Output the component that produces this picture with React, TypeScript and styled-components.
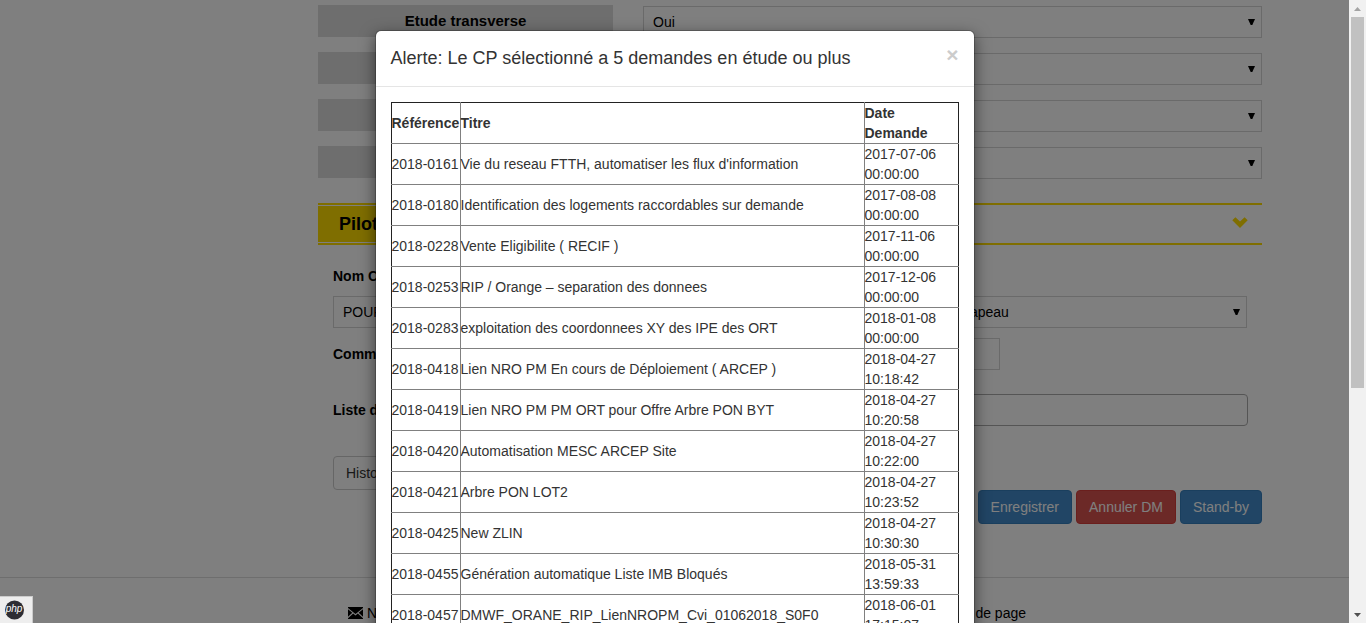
import React from "react";
import styled, { createGlobalStyle, css } from "styled-components";

const GlobalStyle = createGlobalStyle`
  *, *::before, *::after { box-sizing: border-box; }
  html, body { margin: 0; overflow: hidden; }
  body {
    font-family: "Liberation Sans", Arial, sans-serif;
    font-size: 14px;
    line-height: 20px;
    color: #000;
    background: #fff;
  }
  button, input, select { font: inherit; margin: 0; }
`;

const Shell = styled.div`
  display: flex;
  height: 100vh;
`;

const Viewport = styled.div`
  position: relative;
  flex: 1;
  min-width: 0;
  overflow: hidden;
`;

const Page = styled.div`
  padding-top: 5px;
`;

const Container = styled.div`
  display: grid;
  grid-template-columns: minmax(0, 231px) minmax(0, 944px);
  justify-content: center;
`;

const Main = styled.main`
  grid-column: 2;
`;

const FieldList = styled.div`
  display: flex;
  flex-direction: column;
  gap: 14px;
`;

const FieldRow = styled.div`
  display: grid;
  grid-template-columns: 295px 1fr;
  column-gap: 30px;
  height: 33px;
`;

const FieldLabel = styled.label`
  height: 32px;
  line-height: 32px;
  background: #ddd;
  text-align: center;
  font-size: 15px;
  font-weight: bold;
`;

const SelectBox = styled.div`
  display: flex;
  align-self: end;
  align-items: center;
  height: 32px;
  padding-right: 6px;
  border: 1px solid #d5d5d5;
  background: #fff;
`;

const NativeSelect = styled.select`
  appearance: none;
  flex: 1;
  min-width: 0;
  height: 30px;
  padding: 0 9px;
  border: 0;
  background: transparent;
  color: #000;
`;

const Caret = styled.svg`
  width: 7px;
  height: 6px;
  fill: #000;
`;

const SectionHeader = styled.header`
  display: flex;
  align-items: center;
  justify-content: space-between;
  margin-top: 24px;
  padding: 1px 0;
  border: solid #ffdc00;
  border-width: 2px 0;
`;

const SectionTitle = styled.h2`
  margin: 0;
  padding: 0 21px;
  background: #ffdc00;
  font-size: 18px;
  line-height: 36px;
`;

const Toggle = styled.button`
  display: flex;
  padding: 0 14px 3px;
  border: 0;
  background: none;
`;

const SectionBody = styled.section`
  display: flex;
  flex-direction: column;
  padding: 21px 15px 0;
`;

const TextLabel = styled.label`
  font-weight: bold;
`;

const SelectPair = styled.div`
  display: grid;
  grid-template-columns: 1fr 305px;
  column-gap: 30px;
  margin: 10px 0;
`;

const InlineField = styled.div`
  display: grid;
  grid-template-columns: 295px 1fr;
  align-items: center;
`;

const CommentField = styled(InlineField)`
  margin-right: 247px;
`;

const ListField = styled(InlineField)`
  margin: 24px -1px 30px 0;
`;

const TextInput = styled.input<{ $rounded?: boolean }>`
  width: 100%;
  height: 32px;
  padding: 0 9px;
  background: #fff;
  border: 1px solid ${(p) => (p.$rounded ? "#aaa" : "#d5d5d5")};
  border-radius: ${(p) => (p.$rounded ? "4px" : "0")};
`;

const tones = {
  plain: css`color: #333; background: #fff; border-color: #ccc;`,
  primary: css`color: #fff; background: #428bca; border-color: #357ebd;`,
  danger: css`color: #fff; background: #d9534f; border-color: #d43f3a;`,
};

const Button = styled.button<{ $tone: keyof typeof tones }>`
  height: 34px;
  padding: 0 12px;
  border: 1px solid;
  border-radius: 4px;
  ${(p) => tones[p.$tone]}
`;

const HistoryRow = styled.div`
  display: flex;
`;

const Actions = styled.div`
  display: flex;
  justify-content: flex-end;
  gap: 4px;
`;

const Footer = styled.footer`
  margin-top: 53px;
  padding-top: 25px;
  border-top: 1px solid #ddd;
`;

const FooterLinks = styled.nav`
  display: flex;
  justify-content: space-between;
  width: 678px;
  margin-left: 30px;
`;

const FooterLink = styled.a`
  display: flex;
  align-items: center;
  gap: 4px;
  color: #000;
  text-decoration: none;
`;

const Backdrop = styled.div`
  position: absolute;
  inset: 0;
  background: rgba(0, 0, 0, 0.5);
  overflow: hidden;
`;

const Dialog = styled.div`
  width: 600px;
  margin: 30px auto;
  background: #fff;
  background-clip: padding-box;
  border: 1px solid rgba(0, 0, 0, 0.2);
  border-radius: 6px;
  box-shadow: 0 5px 15px rgba(0, 0, 0, 0.5);
  color: #333;
`;

const DialogHeader = styled.div`
  display: flex;
  justify-content: space-between;
  align-items: flex-start;
  padding: 15px;
  border-bottom: 1px solid #e5e5e5;
`;

const DialogTitle = styled.h4`
  margin: 0;
  font-size: 18px;
  line-height: 25px;
  font-weight: normal;
`;

const CloseButton = styled.button`
  padding: 0;
  border: 0;
  background: none;
  color: #ccc;
  font-size: 21px;
  font-weight: bold;
  line-height: 18px;
`;

const DialogBody = styled.div`
  padding: 15px;
`;

const Cell = styled.td`
  padding: 0;
  border: 1px solid #808080;
  text-align: left;
  vertical-align: middle;

  &:first-child { border-left-color: #222; }
  &:last-child { border-right-color: #222; }
`;

const DataTable = styled.table`
  width: 100%;
  table-layout: fixed;
  border-collapse: collapse;

  thead ${Cell} { border-top-color: #222; }
  tbody tr:last-child ${Cell} { border-bottom-color: #222; }
`;

const Column = styled.col<{ $width?: number }>`
  ${(p) => p.$width && `width: ${p.$width}px;`}
`;

const Scrollbar = styled.div`
  display: flex;
  flex-direction: column;
  align-items: center;
  width: 17px;
  background: #f1f1f1;
`;

const ScrollArrow = styled.div`
  display: flex;
  align-items: center;
  justify-content: center;
  height: 17px;
`;

const ScrollTrack = styled.div`
  flex: 1;
`;

const ScrollThumb = styled.div`
  width: 13px;
  height: 63%;
  background: #c1c1c1;
`;

const DebugBadge = styled.button`
  position: absolute;
  left: 0;
  bottom: 0;
  display: flex;
  align-items: center;
  width: 33px;
  height: 27px;
  padding: 0 4px;
  border: solid #ccc;
  border-width: 1px 1px 0 0;
  background: #eee;
`;

const requests = [
  ["2018-0161", "Vie du reseau FTTH, automatiser les flux d'information", "2017-07-06 00:00:00"],
  ["2018-0180", "Identification des logements raccordables sur demande", "2017-08-08 00:00:00"],
  ["2018-0228", "Vente Eligibilite ( RECIF )", "2017-11-06 00:00:00"],
  ["2018-0253", "RIP / Orange – separation des donnees", "2017-12-06 00:00:00"],
  ["2018-0283", "exploitation des coordonnees XY des IPE des ORT", "2018-01-08 00:00:00"],
  ["2018-0418", "Lien NRO PM En cours de Déploiement ( ARCEP )", "2018-04-27 10:18:42"],
  ["2018-0419", "Lien NRO PM PM ORT pour Offre Arbre PON BYT", "2018-04-27 10:20:58"],
  ["2018-0420", "Automatisation MESC ARCEP Site", "2018-04-27 10:22:00"],
  ["2018-0421", "Arbre PON LOT2", "2018-04-27 10:23:52"],
  ["2018-0425", "New ZLIN", "2018-04-27 10:30:30"],
  ["2018-0455", "Génération automatique Liste IMB Bloqués", "2018-05-31 13:59:33"],
  ["2018-0457", "DMWF_ORANE_RIP_LienNROPM_Cvi_01062018_S0F0", "2018-06-01 17:15:07"],
];

const fields = [
  { id: "transverse", label: "Etude transverse", value: "Oui" },
  { id: "field-2", label: "", value: "" },
  { id: "field-3", label: "", value: "" },
  { id: "field-4", label: "", value: "" },
];

function Select({ id, value, label }: { id: string; value: string; label?: string }) {
  return (
    <SelectBox>
      <NativeSelect id={id} aria-label={label} defaultValue={value}>
        <option value={value}>{value}</option>
      </NativeSelect>
      <Caret viewBox="0 0 7 6" aria-hidden="true">
        <path d="M0 0h7L4.300 6h-1.600z" />
      </Caret>
    </SelectBox>
  );
}

export default function App() {
  return (
    <>
      <GlobalStyle />
      <Shell>
        <Viewport>
          <Page>
            <Container>
              <Main>
                <FieldList>
                  {fields.map((f) => (
                    <FieldRow key={f.id}>
                      <FieldLabel htmlFor={f.id}>{f.label}</FieldLabel>
                      <Select id={f.id} value={f.value} />
                    </FieldRow>
                  ))}
                </FieldList>
                <SectionHeader>
                  <SectionTitle>Pilotage</SectionTitle>
                  <Toggle aria-label="Replier">
                    <svg width="16" height="11" viewBox="0 0 16 11" fill="#ffdc00" aria-hidden="true">
                      <path d="M0.300 3.300 3.400 0.200 8 4.600 12.600 0.200 15.700 3.300 8 11z" />
                    </svg>
                  </Toggle>
                </SectionHeader>
                <SectionBody>
                  <TextLabel htmlFor="cp">Nom CP</TextLabel>
                  <SelectPair>
                    <Select id="cp" value="POURCHER" />
                    <Select id="chapeau" value="Chapeau" label="Chapeau" />
                  </SelectPair>
                  <CommentField>
                    <TextLabel htmlFor="comment">Commentaire</TextLabel>
                    <TextInput id="comment" />
                  </CommentField>
                  <ListField>
                    <TextLabel htmlFor="list">Liste des DM</TextLabel>
                    <TextInput id="list" $rounded />
                  </ListField>
                  <HistoryRow>
                    <Button $tone="plain">Historique</Button>
                  </HistoryRow>
                </SectionBody>
                <Actions>
                  <Button $tone="primary">Enregistrer</Button>
                  <Button $tone="danger">Annuler DM</Button>
                  <Button $tone="primary">Stand-by</Button>
                </Actions>
              </Main>
            </Container>
            <Footer>
              <Container>
                <Main as="div">
                  <FooterLinks>
                    <FooterLink href="#contact">
                      <svg width="15" height="12" viewBox="0 0 15 12" aria-hidden="true">
                        <path d="M0 0h15v1L7.500 7 0 1zM0 2.200 4.300 5.800 0 9.800zM15 2.200 10.700 5.800 15 9.800zM0 12v-0.800L5.200 6.500 7.500 8.400 9.800 6.500 15 11.200V12z" />
                      </svg>
                      Nous écrire
                    </FooterLink>
                    <FooterLink href="#top">Haut de page</FooterLink>
                  </FooterLinks>
                </Main>
              </Container>
            </Footer>
          </Page>
          <Backdrop>
            <Dialog role="dialog" aria-modal="true" aria-labelledby="dialog-title">
              <DialogHeader>
                <DialogTitle id="dialog-title">
                  Alerte: Le CP sélectionné a 5 demandes en étude ou plus
                </DialogTitle>
                <CloseButton aria-label="Fermer">×</CloseButton>
              </DialogHeader>
              <DialogBody>
                <DataTable>
                  <colgroup>
                    <Column $width={69} />
                    <Column />
                    <Column $width={94} />
                  </colgroup>
                  <thead>
                    <tr>
                      <Cell as="th">Référence</Cell>
                      <Cell as="th">Titre</Cell>
                      <Cell as="th">Date Demande</Cell>
                    </tr>
                  </thead>
                  <tbody>
                    {requests.map(([reference, title, date]) => (
                      <tr key={reference}>
                        <Cell>{reference}</Cell>
                        <Cell>{title}</Cell>
                        <Cell>{date}</Cell>
                      </tr>
                    ))}
                  </tbody>
                </DataTable>
              </DialogBody>
            </Dialog>
          </Backdrop>
          <DebugBadge aria-label="Barre de débogage PHP">
            <svg width="20" height="20" viewBox="0 0 20 20" aria-hidden="true">
              <circle cx="10.500" cy="10" r="9.500" fill="#2d2d33" />
              <text
                x="10"
                y="12"
                textAnchor="middle"
                fill="#fff"
                fontFamily="Liberation Sans, sans-serif"
                fontSize="10"
                fontStyle="italic"
              >
                php
              </text>
            </svg>
          </DebugBadge>
        </Viewport>
        <Scrollbar aria-hidden="true">
          <ScrollArrow>
            <svg width="7" height="4" viewBox="0 0 7 4" fill="#a3a3a3">
              <path d="M0 4 3.500 0 7 4z" />
            </svg>
          </ScrollArrow>
          <ScrollTrack>
            <ScrollThumb />
          </ScrollTrack>
          <ScrollArrow>
            <svg width="7" height="4" viewBox="0 0 7 4" fill="#505050">
              <path d="M0 0h7L3.500 4z" />
            </svg>
          </ScrollArrow>
        </Scrollbar>
      </Shell>
    </>
  );
}
